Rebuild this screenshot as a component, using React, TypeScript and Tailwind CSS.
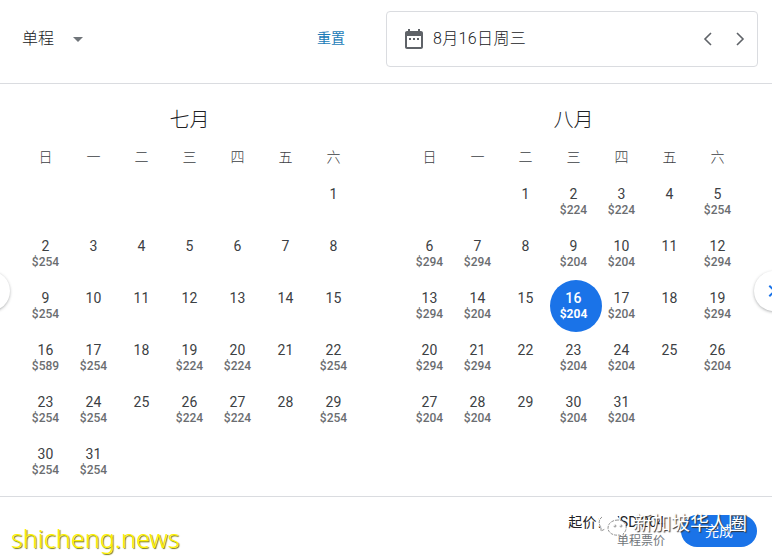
import React from 'react';

const WEEKDAYS = ['日', '一', '二', '三', '四', '五', '六'];

type Month = {
    title: string;
    offset: number;
    days: number;
    prices: Record<number, number>;
    selected?: number;
};

const july: Month = {
    title: '七月',
    offset: 6,
    days: 31,
    prices: {
        2: 254, 9: 254, 16: 589, 17: 254, 19: 224, 20: 224, 22: 254,
        23: 254, 24: 254, 26: 224, 27: 224, 29: 254, 30: 254, 31: 254,
    },
};

const august: Month = {
    title: '八月',
    offset: 2,
    days: 31,
    selected: 16,
    prices: {
        2: 224, 3: 224, 5: 254, 6: 294, 7: 294, 9: 204, 10: 204, 12: 294,
        13: 294, 14: 204, 16: 204, 17: 204, 19: 294, 20: 294, 21: 294,
        23: 204, 24: 204, 26: 204, 27: 204, 28: 204, 30: 204, 31: 204,
    },
};

const DayCell: React.FC<{ day: number; price?: number; selected: boolean }> = ({ day, price, selected }) => (
    <button type="button" className="relative flex h-[52px] w-12 flex-col items-center pt-2.5">
        {selected && <span className="absolute left-0 top-0 size-[52px] rounded-full bg-[#1a73e8]" />}
        <span className={selected ? 'relative text-sm leading-4 font-medium tracking-[0.2px] text-white' : 'text-sm leading-4 tracking-[0.2px] text-[#3c4043]'}>
            {day}
        </span>
        {price && (
            <span className={selected ? 'relative text-xs leading-4 font-bold text-white' : 'text-xs leading-4 font-medium text-[#6a6d70]'}>
                ${price}
            </span>
        )}
    </button>
);

const MonthGrid: React.FC<{ month: Month }> = ({ month }) => (
    <section className="w-[336px]">
        <h2 className="pt-[22px] text-center text-[20px] leading-7 font-light text-[#202124]">{month.title}</h2>
        <div className="mt-[11px] grid h-[31px] grid-cols-7 text-center text-sm leading-6 font-light text-[#3c4043]">
            {WEEKDAYS.map((name) => (
                <span key={name}>{name}</span>
            ))}
        </div>
        <div className="grid grid-cols-7">
            {Array.from({ length: month.offset }, (_, i) => (
                <span key={`blank-${i}`} />
            ))}
            {Array.from({ length: month.days }, (_, i) => i + 1).map((day) => (
                <DayCell key={day} day={day} price={month.prices[day]} selected={day === month.selected} />
            ))}
        </div>
    </section>
);

const App: React.FC = () => {
    return (
        <div className="relative flex h-[557px] w-[772px] flex-col overflow-hidden bg-white font-[Roboto,'Noto_Sans_CJK_SC',sans-serif]">
            <header className="flex h-[84px] shrink-0 items-start border-b border-[#dadce0] pr-3.5 pl-[22px]">
                <button type="button" className="mt-[27px] flex items-center text-base leading-6 font-light text-[#202124]">
                    单程
                    <svg className="ml-[19px] h-[5px] w-2.5" viewBox="0 0 10 5" fill="#70757a">
                        <path d="M0 0h10L5 5z" />
                    </svg>
                </button>
                <button type="button" className="mt-[26px] ml-auto text-sm leading-6 text-[#1a7cb8]">重置</button>
                <div className="mt-[11px] ml-[41px] flex h-14 w-[372px] items-center rounded border border-[#dadce0] pl-[15px]">
                    <svg className="size-6" viewBox="0 0 24 24" fill="#5f6368">
                        <path d="M9 11H7v2h2v-2zm4 0h-2v2h2v-2zm4 0h-2v2h2v-2zm2-7h-1V2h-2v2H8V2H6v2H5c-1.11 0-1.99.9-1.99 2L3 20c0 1.1.89 2 2 2h14c1.1 0 2-.9 2-2V6c0-1.1-.9-2-2-2zm0 16H5V9h14v11z" />
                    </svg>
                    <span className="ml-[7px] text-base leading-6 font-light tracking-[0.35px] text-[#202124]">8月16日周三</span>
                    <svg className="ml-auto size-6" viewBox="0 0 24 24" fill="none" stroke="#5f6368" strokeWidth="1.6">
                        <path d="M15 6l-6 6 6 6" />
                    </svg>
                    <svg className="mr-[5px] ml-2 size-6" viewBox="0 0 24 24" fill="none" stroke="#5f6368" strokeWidth="1.6">
                        <path d="M9 6l6 6-6 6" />
                    </svg>
                </div>
            </header>

            <main className="flex h-[412px] shrink-0 gap-12 pl-[21.5px]">
                <MonthGrid month={july} />
                <MonthGrid month={august} />
            </main>

            <footer className="flex flex-1 items-start justify-end border-t border-[#dadce0] pr-[15px]">
                <div className="mt-[15px] text-right">
                    <p className="text-sm leading-5 tracking-[0.1px] text-[#202124]">起价：USD 204</p>
                    <p className="text-xs leading-[18px] text-[#70757a]">单程票价</p>
                </div>
                <button type="button" className="mt-[18px] ml-4 h-[32px] w-[76px] rounded-full bg-[#1a73e8] text-sm text-white">
                    完成
                </button>
            </footer>

            {/* month paging buttons, cut off by the dialog edges */}
            <span className="absolute top-[271px] -left-[30px] size-10 rounded-full bg-white shadow-[0_1px_3px_rgba(60,64,67,0.4)]" />
            <span className="absolute top-[271px] left-[754px] flex size-10 items-center justify-center rounded-full bg-white shadow-[0_1px_3px_rgba(60,64,67,0.4)]">
                <svg className="size-6" viewBox="0 0 24 24" fill="#1a73e8">
                    <path d="M6.590 16.590 8 18l6-6-6-6-1.410 1.410L11.170 12z" />
                </svg>
            </span>

            {/* watermarks */}
            <span className="absolute top-[522px] left-[11px] font-['Noto_Sans',sans-serif] text-[25px] leading-8 font-light tracking-[0.1px] text-[#fff200] [text-shadow:1px_1px_1px_#77770a]">
                shicheng.news
            </span>
            <div className="absolute top-[510px] left-[597px] flex items-center">
                <svg className="h-7 w-8" viewBox="0 0 32 28" fill="#fff" stroke="#777" strokeWidth="0.8" strokeDasharray="3 1">
                    <path stroke="none" d="M12 3C5.500 3 1 7 1 12c0 3 1.500 5 4 7l-1 3 4-2c7 2 15-2 15-8 0-5-5-9-11-9z" />
                    <path fill="none" d="M5 7C2 9 1 14 4 17l0 4 4-2" />
                    <path d="M21 10c-6 0-10 3.500-10 8s5 8 11 7l5 2-1-3c6-5 3-14-5-14z" />
                    <circle cx="18" cy="16" r="1" />
                    <circle cx="24" cy="16" r="1" />
                </svg>
                <span className="ml-1 text-[19px] leading-7 text-white [text-shadow:1px_1px_1px_#333]">新加坡华人圈</span>
            </div>
        </div>
    );
};

export default App;
